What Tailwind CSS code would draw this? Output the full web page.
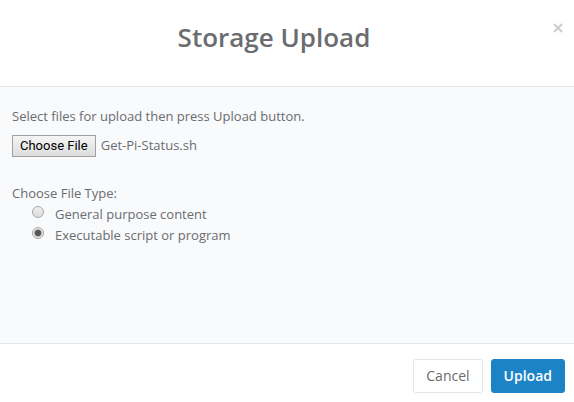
<!DOCTYPE html>
<html lang="en">
<head>
<meta charset="utf-8">
<meta name="viewport" content="width=device-width, initial-scale=1">
<title>Storage Upload</title>
<script src="https://cdn.jsdelivr.net/npm/@tailwindcss/browser@4"></script>
</head>
<body class="min-h-screen bg-white font-['Open_Sans',sans-serif] text-[13px] leading-5 text-[#6a6c6f]">
<form class="flex min-h-screen flex-col">
  <header class="relative border-b border-[#e4e5e7] px-8 pt-5 pb-8">
    <h1 class="text-center text-[26px] leading-[34px] font-semibold text-[#6a6c6f] pr-[26px]">Storage Upload</h1>
    <button type="button" aria-label="Close" class="absolute top-[22px] right-2.5 p-px text-[#cccccc]">
      <svg class="size-[10px]" viewBox="0 0 10 10" fill="none" stroke="currentColor" stroke-width="2" aria-hidden="true"><path d="M1 1l8 8M9 1L1 9"/></svg>
    </button>
  </header>
  <main class="grow border-b border-[#e4e5e7] bg-[#f9fafc] px-3 pt-[19px]">
    <label for="file" class="block">Select files for upload then press Upload button.</label>
    <input id="file" type="file" class="mt-[9px] block w-full text-[13px] leading-5 file:mr-[5px] file:h-[22px] file:border file:border-solid file:border-[#a0a0a0] file:bg-linear-to-b file:from-[#f5f5f5] file:to-[#dddddd] file:px-[7px] file:font-['Roboto',sans-serif] file:text-[13px] file:leading-5 file:font-normal file:text-black">
    <fieldset class="mt-[26px]">
      <legend>Choose File Type:</legend>
      <div class="flex flex-col pl-5">
        <label class="flex items-start gap-[11px]"><input type="radio" name="type" class="mt-[3px] size-3 appearance-none rounded-full border border-[#a8a8a8] bg-linear-to-b from-[#eeeeee] to-[#dddddd] checked:bg-[radial-gradient(circle,#555_0_2px,#666_3px,#e8e8e8_4px)]"><span class="pt-px">General purpose content</span></label>
        <label class="flex items-start gap-[11px]"><input type="radio" name="type" checked class="mt-[3px] size-3 appearance-none rounded-full border border-[#a8a8a8] bg-linear-to-b from-[#eeeeee] to-[#dddddd] checked:bg-[radial-gradient(circle,#555_0_2px,#666_3px,#e8e8e8_4px)]"><span class="pt-px">Executable script or program</span></label>
      </div>
    </fieldset>
  </main>
  <footer class="flex justify-end gap-2 px-[9px] pt-[15px] pb-[9px] text-[14px]">
    <button type="button" class="rounded-[3px] border border-[#e4e5e7] bg-white px-3 py-1.5">Cancel</button>
    <button type="submit" class="rounded-[3px] border border-[#1c84c6] bg-[#1c84c6] px-3 py-1.5 font-semibold text-white">Upload</button>
  </footer>
</form>
<script>
  const selection = new DataTransfer();
  selection.items.add(new File(['#!/bin/sh\n'], 'Get-Pi-Status.sh'));
  document.getElementById('file').files = selection.files;
</script>
</body>
</html>
